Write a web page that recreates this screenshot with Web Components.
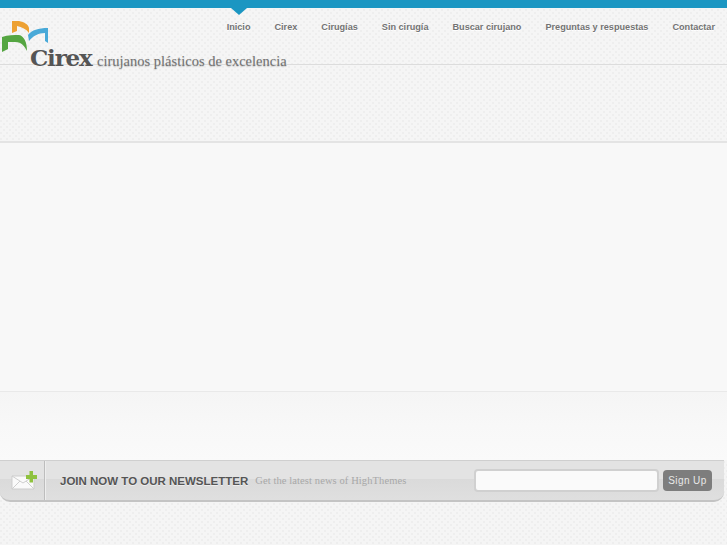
<!DOCTYPE html>
<html lang="es"><head><meta charset="utf-8"><title>Cirex</title>
<style>
html,body{margin:0;padding:0}
body{width:727px;height:545px;overflow:hidden;font-family:"Liberation Sans",Arial,sans-serif;display:flex;flex-direction:column;background:#f6f6f6}
</style></head><body>
<site-header>
  <site-logo slot="logo"></site-logo>
  <nav-link active>Inicio</nav-link>
  <nav-link>Cirex</nav-link>
  <nav-link>Cirugías</nav-link>
  <nav-link>Sin cirugía</nav-link>
  <nav-link>Buscar cirujano</nav-link>
  <nav-link>Preguntas y respuestas</nav-link>
  <nav-link>Contactar</nav-link>
</site-header>
<hero-area></hero-area>
<news-letter></news-letter>
<script>
const pattern=`background-color:#f5f5f5;background-image:radial-gradient(circle at 1px 1px,#eeeeee 1px,transparent 1.2px),radial-gradient(circle at 4px 4px,#eeeeee 1px,transparent 1.2px);background-size:6px 6px;`;
function def(name,html){
  customElements.define(name,class extends HTMLElement{
    constructor(){super();this.attachShadow({mode:'open'}).innerHTML=html;}
  });
}
def('site-header',`<style>
:host{display:block;height:143px;box-sizing:border-box;position:relative;border-bottom:2px solid #e4e4e4;${pattern}}
.bar{height:8px;background:#1b96c2}
.top{height:57px;box-sizing:border-box;border-bottom:1px solid #dcdcdc}
nav{display:flex;justify-content:flex-end;gap:24px;padding:13px 12px 0 0}
</style><div class="bar"></div><div class="top"><nav><slot></slot></nav></div><slot name="logo"></slot>`);
def('nav-link',`<style>
:host{display:block;position:relative;font:bold 9.15px/13px "Liberation Sans",Arial,sans-serif;color:#737373;white-space:nowrap;text-shadow:0 1px 0 #fff}
:host([active])::before{content:"";position:absolute;left:50%;margin-left:-8px;top:-13px;border:8px solid transparent;border-top:7px solid #1b96c2;border-bottom:0}
</style><slot></slot>`);
def('site-logo',`<style>
:host{display:flex;position:absolute;left:0;top:20px;width:295px;height:52px}
svg{position:absolute;left:0;top:0}
.name{position:absolute;left:30px;top:24px;font:bold 23px/28px "DejaVu Serif","Liberation Serif",serif;letter-spacing:-1.2px;color:#555;white-space:nowrap}
.tag{position:absolute;left:97px;top:32px;font:14.5px/18px "Liberation Serif",serif;color:#727272;white-space:nowrap;text-shadow:0 1px 1px #ccc}
</style>
<svg width="52" height="36" viewBox="0 0 52 36">
<path d="M2 17C8 15 14 15 19 15C24 16 27 22 27 31C25 27 22 22 15 22L8 22L8 29L2 32Z" fill="#55a642"/>
<path d="M12 1L19 1C24 2 28 4 29 8L29 13C26 9 22 7 17 6L17 11L12 13Z" fill="#eda133"/>
<path d="M28 15C32 10 38 8 48 8L48 23L45 21L45 13C38 13 33 16 29 21Z" fill="#48a9d8"/>
</svg>
<span class="name">Cirex</span><span class="tag">cirujanos plásticos de excelencia</span>`);
def('hero-area',`<style>
:host{display:block;height:249px;background:#f8f8f8;border-bottom:1px solid #e9e9e9;box-sizing:border-box}
</style>`);
def('news-letter',`<style>
:host{display:block;height:153px;box-sizing:border-box;${pattern}}
.fade{height:68px;background:linear-gradient(#f5f5f5,#f8f8f8 50%,#fafafa)}
.bar{height:42px;width:724px;box-sizing:border-box;border-top:1px solid #cfcfcf;border-bottom:2px solid #c4c4c4;border-radius:0 0 10px 10px;background:linear-gradient(#e3e3e3 0,#e3e3e3 45%,#dadada 46%,#dfdfdf 100%);display:flex;align-items:center}
.ico{width:45px;height:100%;box-sizing:border-box;border-right:1px solid #bdbdbd;box-shadow:1px 0 0 #eee;display:flex;align-items:center;padding-left:11px}
h3{margin:0 0 0 15px;font:bold 11.5px/16px "Liberation Sans",Arial,sans-serif;color:#555;white-space:nowrap;text-shadow:0 1px 0 #eee}
p{margin:0 0 0 7px;font:10.5px/16px "Liberation Serif",serif;letter-spacing:.1px;color:#a8a8a8;white-space:nowrap;flex:1}
.inp{width:185px;height:23px;box-sizing:border-box;border:2px solid #d0d0d0;border-radius:4px;background:#fafafa;margin-right:4px}
.btn{width:49px;height:21px;border-radius:4px;background:#7d7d7d;color:#e9e9e9;font:10px/21px "Liberation Sans",Arial,sans-serif;letter-spacing:.4px;text-align:center;margin-right:12px}
</style>
<div class="fade"></div>
<div class="bar"><div class="ico">
<svg width="26" height="20" viewBox="0 0 26 20"><path d="M1 5H23V18H1Z" fill="#fafafa" stroke="#cdcdcd"/><path d="M1 5L12 12L23 5M1 18L9 10M23 18L15 10" fill="none" stroke="#cfcfcf"/><path d="M15 4H18.500V0H22V4H26V8H22V11.500H18.500V8H15Z" fill="#8fc23f"/></svg>
</div><h3>JOIN NOW TO OUR NEWSLETTER</h3><p>Get the latest news of HighThemes</p><div class="inp"></div><div class="btn">Sign Up</div></div>`);
</script>
</body></html>
